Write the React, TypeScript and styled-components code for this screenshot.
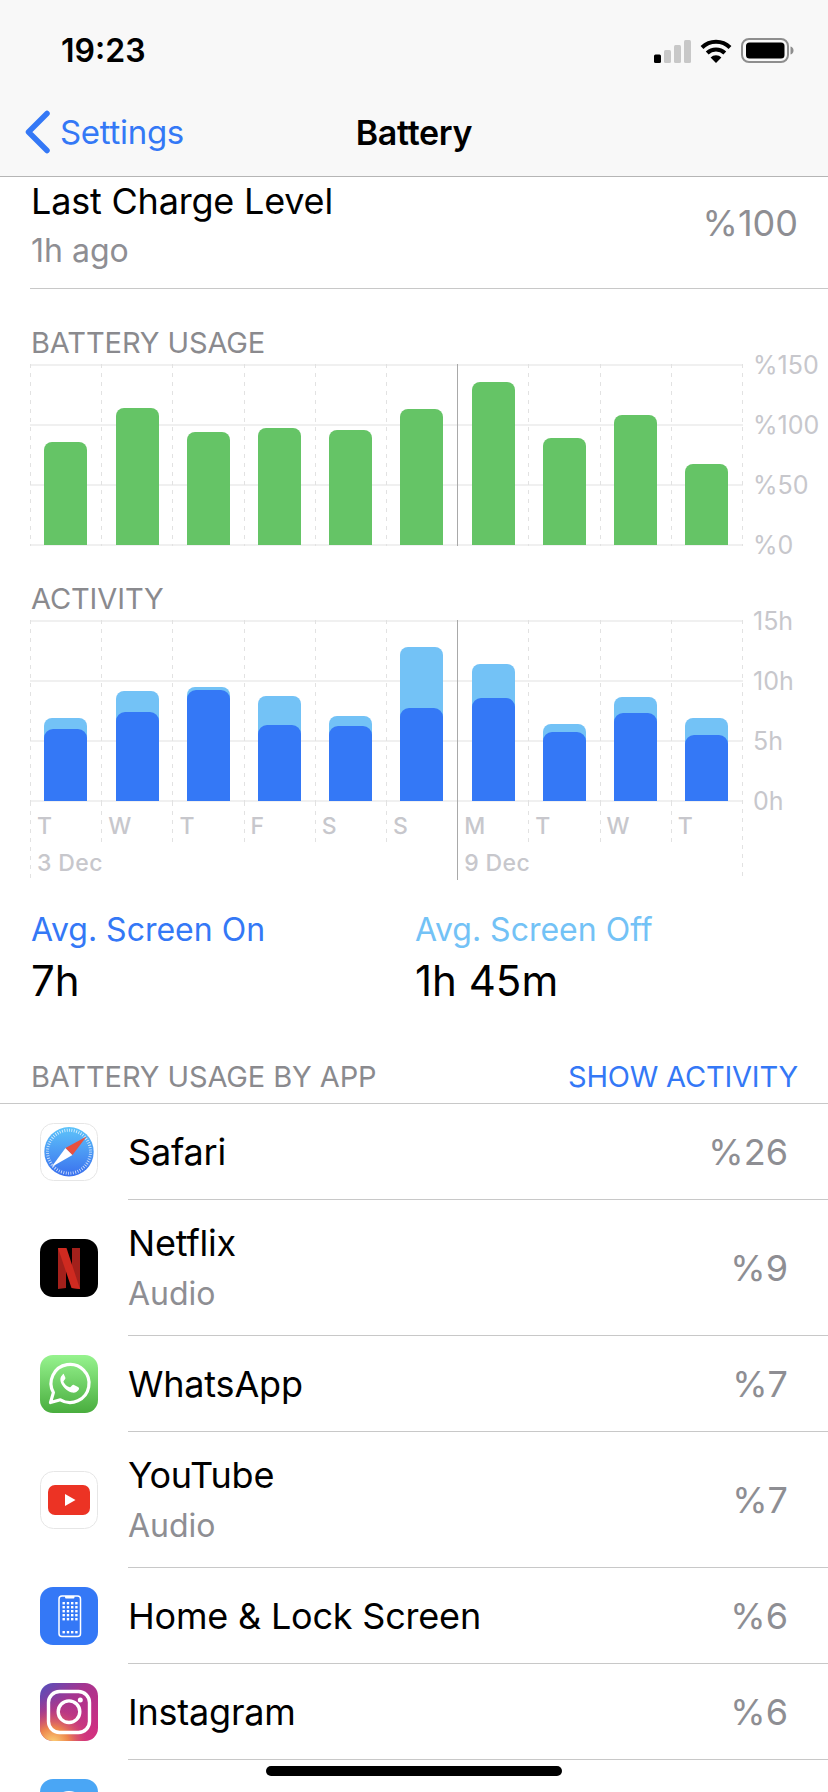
import styled, { createGlobalStyle } from "styled-components";

const GlobalStyle = createGlobalStyle`
	html, body {
		margin: 0;
		padding: 0;
		background: #fff;
	}
	body {
		font-family: Inter, "Liberation Sans", sans-serif;
		color: #000;
		-webkit-font-smoothing: antialiased;
	}
`

const Screen = styled.div`
	position: relative;
	width: 828px;
	height: 1792px;
	overflow: hidden;
	background: #fff;
`

const Header = styled.header`
	height: 176px;
	background: #f8f8f8;
	border-bottom: 1px solid #b5b5b5;
`

const StatusBar = styled.div`
	height: 100px;
	padding: 0 34px 0 61px;
	display: flex;
	align-items: center;
	justify-content: space-between;
`

const Time = styled.div`
	font-size: 32px;
	font-weight: 600;
`

const StatusIcons = styled.div`
	display: flex;
	align-items: flex-end;
	gap: 9px;
`

const NavBar = styled.nav`
	height: 64px;
	display: grid;
	grid-template-columns: 1fr auto 1fr;
	align-items: center;
`

const BackLink = styled.div`
	display: flex;
	align-items: center;
	gap: 9px;
	padding-left: 24px;
	font-size: 33px;
	color: #3478f6;
	letter-spacing: -0.3px;
`

const NavTitle = styled.div`
	font-size: 34px;
	font-weight: 600;
	letter-spacing: -0.3px;
`

const LastCharge = styled.section`
	margin: 0 0 1px 30px;
	height: 112px;
	padding: 4px 30px 0 1px;
	box-sizing: border-box;
	display: flex;
	justify-content: space-between;
	border-bottom: 1px solid #c8c8c8;
`

const RowTitle = styled.div`
	font-size: 36px;
	line-height: 40px;
	letter-spacing: -0.2px;
`

const RowSub = styled.div<{ $gap: number }>`
	margin-top: ${(p) => p.$gap}px;
	font-size: 32px;
	line-height: 36px;
	color: #8e8e93;
`

const RowValue = styled.div<{ $top?: number }>`
	margin-top: ${(p) => p.$top ?? 0}px;
	font-size: 36px;
	line-height: 40px;
	color: #8e8e93;
`

const ChartSection = styled.section`
	padding: 38px 0 0 31px;
`

const SectionLabel = styled.div`
	font-size: 29px;
	line-height: 30px;
	color: #8a8a8e;
	letter-spacing: -0.1px;
`

const ChartRow = styled.div`
	margin: 6px 0 0 -1px;
	display: flex;
`

const ChartBody = styled.div`
	position: relative;
	width: 713px;

	&::after {
		content: "";
		position: absolute;
		top: 0;
		bottom: 0;
		right: 0;
		width: 1px;
		background: repeating-linear-gradient(to bottom, #e2e2e2 0 4px, transparent 4px 9px);
	}
`

const Plot = styled.div`
	position: relative;
	height: 182px;
	display: grid;
	grid-template-columns: repeat(10, 71.2px);
`

const GridLine = styled.div<{ $top: number }>`
	position: absolute;
	left: 0;
	right: 0;
	top: ${(p) => p.$top}px;
	height: 2px;
	background: #f0f0f0;
`

const dashes = "repeating-linear-gradient(to bottom, #e2e2e2 0 4px, transparent 4px 9px)"
const solid = "linear-gradient(#a9a9a9, #a9a9a9)"

const Column = styled.div<{ $solid?: boolean }>`
	position: relative;
	display: flex;
	align-items: flex-end;
	padding: 0 0 1px 14.4px;
	background: ${(p) => (p.$solid ? solid : dashes)} left top / 1px 100% no-repeat;
`

const GreenBar = styled.div<{ $h: number }>`
	width: 43px;
	height: ${(p) => p.$h}px;
	background: #65c466;
	border-radius: 8px 8px 0 0;
`

const OffBar = styled.div<{ $h: number }>`
	width: 43px;
	height: ${(p) => p.$h}px;
	display: flex;
	align-items: flex-end;
	background: #73c2f6;
	border-radius: 8px 8px 0 0;
`

const OnBar = styled.div<{ $h: number }>`
	width: 100%;
	height: ${(p) => p.$h}px;
	background: #3478f6;
	border-radius: 9px 9px 0 0;
`

const DayRow = styled.div`
	height: 45px;
	display: grid;
	grid-template-columns: repeat(10, 71.2px);
`

const DayCell = styled.div<{ $solid?: boolean }>`
	padding: 10px 0 0 7px;
	font-size: 23px;
	line-height: 28px;
	font-weight: 500;
	color: #c7c7cc;
	background: ${(p) => (p.$solid ? solid : dashes)} left top / 1px 100% no-repeat;
`

const DateRow = styled.div`
	height: 33px;
	display: grid;
	grid-template-columns: 427.2px 284.8px;
`

const DateCell = styled(DayCell)`
	padding: 2px 0 0 7px;
	letter-spacing: 0.4px;
`

const YAxis = styled.div`
	margin: -12px 0 -12px 10px;
	height: 206px;
	display: flex;
	flex-direction: column;
	justify-content: space-between;
`

const YLabel = styled.div`
	font-size: 25px;
	line-height: 26px;
	color: #c7c7cc;
`

const Stats = styled.section`
	margin-top: 30px;
	padding-left: 31px;
	display: grid;
	grid-template-columns: 384px 1fr;
`

const StatLabel = styled.div<{ $color: string }>`
	font-size: 32px;
	line-height: 40px;
	color: ${(p) => p.$color};
`

const StatValue = styled.div`
	margin-top: 7px;
	font-size: 42px;
	line-height: 48px;
`

const AppsHeader = styled.div`
	margin-top: 57px;
	padding: 0 30px 11px 31px;
	display: flex;
	justify-content: space-between;
	font-size: 29px;
	line-height: 30px;
	color: #8a8a8e;
	letter-spacing: -0.1px;
	border-bottom: 1px solid #c8c8c8;
`

const ShowActivity = styled.div`
	color: #3478f6;
	letter-spacing: -0.2px;
`

const AppRow = styled.div`
	display: flex;
	padding-left: 40px;
`

const AppIcon = styled.div`
	flex: none;
	align-self: center;
	margin-right: 30px;
	width: 58px;
	height: 58px;

	svg {
		display: block;
	}
`

const AppBody = styled.div<{ $tall?: boolean }>`
	flex: 1;
	height: ${(p) => (p.$tall ? 135 : 95)}px;
	padding-right: 40px;
	display: flex;
	align-items: center;
	justify-content: space-between;
	border-bottom: 1px solid #c8c8c8;
`

const HomeIndicator = styled.div`
	position: absolute;
	left: 266px;
	top: 1766px;
	width: 296px;
	height: 10px;
	border-radius: 5px;
	background: #000;
`

const SignalBars = () => (
	<svg width="37" height="23" viewBox="0 0 37 23">
		<rect x="0" y="14.5" width="7" height="8.5" rx="1.5" fill="#000" />
		<rect x="10" y="10" width="7" height="13" rx="1.5" fill="#c8c8c8" />
		<rect x="20" y="5" width="7" height="18" rx="1.5" fill="#c8c8c8" />
		<rect x="30" y="0" width="7" height="23" rx="1.5" fill="#c8c8c8" />
	</svg>
)

const WifiIcon = () => (
	<svg width="32" height="24" viewBox="0 0 32 24">
		<path d="M2 8.5A20 20 0 0 1 30 8.5" fill="none" stroke="#000" strokeWidth="4" />
		<path d="M7.2 14A12.5 12.5 0 0 1 24.8 14" fill="none" stroke="#000" strokeWidth="4" />
		<path d="M16 24L10.6 18.4A7.6 7.6 0 0 1 21.4 18.4Z" fill="#000" />
	</svg>
)

const BatteryIcon = () => (
	<svg width="53" height="25" viewBox="0 0 53 25">
		<rect x="1" y="1" width="46" height="23" rx="7" fill="none" stroke="#8e8e8e" strokeWidth="2" />
		<rect x="5" y="4.5" width="38.5" height="16" rx="3.5" fill="#000" />
		<path d="M49.5 8.5C51.5 9 52.5 10.5 52.5 12.5C52.5 14.5 51.5 16 49.5 16.5Z" fill="#8e8e8e" />
	</svg>
)

const Chevron = () => (
	<svg width="27" height="44" viewBox="0 0 27 44">
		<path d="M23 3.5L4.5 22L23 40.5" fill="none" stroke="#3478f6" strokeWidth="5.5" strokeLinecap="round" strokeLinejoin="round" />
	</svg>
)

const SafariIcon = () => (
	<svg width="58" height="58" viewBox="0 0 58 58">
		<defs>
			<linearGradient id="safariBlue" x1="0" y1="0" x2="0" y2="1">
				<stop offset="0" stopColor="#5ec4fa" />
				<stop offset="1" stopColor="#3a70ee" />
			</linearGradient>
		</defs>
		<rect x="0.5" y="0.5" width="57" height="57" rx="13" fill="#fff" stroke="#e6e6e6" />
		<circle cx="29" cy="28.7" r="24.7" fill="url(#safariBlue)" />
		<circle cx="29" cy="28.7" r="21.5" fill="none" stroke="#fff" strokeOpacity="0.8" strokeWidth="3" strokeDasharray="0.8 1.6" />
		<path d="M11.5 44L25.5 25L32.5 32Z" fill="#fff" />
		<path d="M46.5 13.5L25.5 25L32.5 32Z" fill="#e9503f" />
	</svg>
)

const NetflixIcon = () => (
	<svg width="58" height="58" viewBox="0 0 58 58">
		<rect width="58" height="58" rx="13" fill="#000" />
		<path d="M18 9H26V49L18 50Z" fill="#a3201b" />
		<path d="M32 9H40V50L32 49Z" fill="#a3201b" />
		<path d="M18 9H26.5L40 50L31.5 49Z" fill="#cf2a20" />
	</svg>
)

const WhatsAppIcon = () => (
	<svg width="58" height="58" viewBox="0 0 58 58">
		<defs>
			<linearGradient id="whatsGreen" x1="0" y1="0" x2="0" y2="1">
				<stop offset="0" stopColor="#96f38e" />
				<stop offset="1" stopColor="#49ad3e" />
			</linearGradient>
		</defs>
		<rect width="58" height="58" rx="13" fill="url(#whatsGreen)" />
		<path d="M10.5 47.5L13.4 37.6A19 19 0 1 1 20.4 44.8Z" fill="none" stroke="#fff" strokeWidth="3.2" strokeLinejoin="round" />
		<path d="M22 20.5C21 21.5 20 23 20.5 26C21.5 31 27 36.5 32 37.5C35 38 37 37 38.5 35C39.5 33.5 39 32.5 38 32L34 30C33 29.5 32.5 30 32 30.5L30.5 32C29.5 32.5 28.5 32 27 31C25.5 30 24.5 28.5 23.8 27.5C23.2 26.5 23.5 26 24 25.5L25 24.2C25.5 23.5 25.5 23 25.2 22.3L23.7 19C23.3 18.2 22.5 20 22 20.5Z" fill="#fff" />
	</svg>
)

const YouTubeIcon = () => (
	<svg width="58" height="58" viewBox="0 0 58 58">
		<rect x="0.5" y="0.5" width="57" height="57" rx="13" fill="#fff" stroke="#e6e6e6" />
		<rect x="8" y="14" width="42" height="30" rx="7" fill="#ec3324" />
		<path d="M25 23L35.5 29L25 35Z" fill="#fff" />
	</svg>
)

const HomeScreenIcon = () => (
	<svg width="58" height="58" viewBox="0 0 58 58">
		<rect width="58" height="58" rx="13" fill="#3478f6" />
		<rect x="19" y="9" width="21.5" height="40.5" rx="3" fill="none" stroke="#fff" strokeWidth="1.5" />
		<path d="M25 9H34.5V10C34.5 11 34 11.5 33 11.5H26.5C25.5 11.5 25 11 25 10Z" fill="#fff" />
		{[15, 19, 23, 27, 31].map((y) =>
			[22.5, 26.8, 31, 35.2].map((x) => (
				<rect key={`${x}-${y}`} x={x} y={y} width="2.4" height="2.4" fill="#fff" />
			))
		)}
		{[22.5, 26.8, 31, 35.2].map((x) => (
			<rect key={x} x={x} y="44" width="2.4" height="2.4" fill="#fff" />
		))}
	</svg>
)

const InstagramIcon = () => (
	<svg width="58" height="58" viewBox="0 0 58 58">
		<defs>
			<linearGradient id="igBase" x1="0.9" y1="0.9" x2="0.1" y2="0">
				<stop offset="0" stopColor="#d02f82" />
				<stop offset="0.6" stopColor="#a6348f" />
				<stop offset="1" stopColor="#5b4db8" />
			</linearGradient>
			<radialGradient id="igGlow" cx="0.22" cy="1.05" r="0.8">
				<stop offset="0" stopColor="#fdd97a" />
				<stop offset="0.35" stopColor="#f08a4a" stopOpacity="0.95" />
				<stop offset="0.75" stopColor="#d9436e" stopOpacity="0.25" />
				<stop offset="1" stopColor="#d9436e" stopOpacity="0" />
			</radialGradient>
		</defs>
		<rect width="58" height="58" rx="13" fill="url(#igBase)" />
		<rect width="58" height="58" rx="13" fill="url(#igGlow)" />
		<rect x="8.5" y="8.5" width="41" height="41" rx="11" fill="none" stroke="#fff" strokeWidth="3.4" />
		<circle cx="29" cy="28.7" r="10.8" fill="none" stroke="#fff" strokeWidth="3.4" />
		<circle cx="40.3" cy="17" r="2.5" fill="#fff" />
	</svg>
)

const NextAppIcon = () => (
	<svg width="58" height="58" viewBox="0 0 58 58">
		<rect width="58" height="58" rx="13" fill="#4aa6f5" />
		<ellipse cx="29" cy="29" rx="17" ry="17" fill="#fff" />
	</svg>
)

const usage = [103, 137, 113, 117, 115, 136, 163, 107, 130, 81]
const activity = [
	[83, 72], [110, 89], [114, 111], [105, 76], [85, 75],
	[154, 93], [137, 103], [77, 69], [104, 88], [83, 66],
]
const days = ["T", "W", "T", "F", "S", "S", "M", "T", "W", "T"]
const divider = 6

const apps = [
	{ name: "Safari", value: "%26", icon: <SafariIcon /> },
	{ name: "Netflix", sub: "Audio", value: "%9", icon: <NetflixIcon /> },
	{ name: "WhatsApp", value: "%7", icon: <WhatsAppIcon /> },
	{ name: "YouTube", sub: "Audio", value: "%7", icon: <YouTubeIcon /> },
	{ name: "Home & Lock Screen", value: "%6", icon: <HomeScreenIcon /> },
	{ name: "Instagram", value: "%6", icon: <InstagramIcon /> },
]

const Lines = () => (
	<>
		{[0, 60, 120, 180].map((top) => (
			<GridLine key={top} $top={top} />
		))}
	</>
)

const App = () => {
	return (
		<Screen>
			<GlobalStyle />
			<Header>
				<StatusBar>
					<Time>19:23</Time>
					<StatusIcons>
						<SignalBars />
						<WifiIcon />
						<BatteryIcon />
					</StatusIcons>
				</StatusBar>
				<NavBar>
					<BackLink>
						<Chevron />
						Settings
					</BackLink>
					<NavTitle>Battery</NavTitle>
				</NavBar>
			</Header>

			<LastCharge>
				<div>
					<RowTitle>Last Charge Level</RowTitle>
					<RowSub $gap={12}>1h ago</RowSub>
				</div>
				<RowValue $top={22}>%100</RowValue>
			</LastCharge>

			<ChartSection>
				<SectionLabel>BATTERY USAGE</SectionLabel>
				<ChartRow>
					<ChartBody>
						<Plot>
							<Lines />
							{usage.map((h, i) => (
								<Column key={i} $solid={i === divider}>
									<GreenBar $h={h} />
								</Column>
							))}
						</Plot>
					</ChartBody>
					<YAxis>
						{["%150", "%100", "%50", "%0"].map((t) => (
							<YLabel key={t}>{t}</YLabel>
						))}
					</YAxis>
				</ChartRow>
			</ChartSection>

			<ChartSection>
				<SectionLabel>ACTIVITY</SectionLabel>
				<ChartRow>
					<ChartBody>
						<Plot>
							<Lines />
							{activity.map(([off, on], i) => (
								<Column key={i} $solid={i === divider}>
									<OffBar $h={off}>
										<OnBar $h={on} />
									</OffBar>
								</Column>
							))}
						</Plot>
						<DayRow>
							{days.map((d, i) => (
								<DayCell key={i} $solid={i === divider}>{d}</DayCell>
							))}
						</DayRow>
						<DateRow>
							<DateCell>3 Dec</DateCell>
							<DateCell $solid>9 Dec</DateCell>
						</DateRow>
					</ChartBody>
					<YAxis>
						{["15h", "10h", "5h", "0h"].map((t) => (
							<YLabel key={t}>{t}</YLabel>
						))}
					</YAxis>
				</ChartRow>
			</ChartSection>

			<Stats>
				<div>
					<StatLabel $color="#3478f6">Avg. Screen On</StatLabel>
					<StatValue>7h</StatValue>
				</div>
				<div>
					<StatLabel $color="#73c2f6">Avg. Screen Off</StatLabel>
					<StatValue>1h 45m</StatValue>
				</div>
			</Stats>

			<AppsHeader>
				<div>BATTERY USAGE BY APP</div>
				<ShowActivity>SHOW ACTIVITY</ShowActivity>
			</AppsHeader>

			{apps.map((app) => (
				<AppRow key={app.name}>
					<AppIcon>{app.icon}</AppIcon>
					<AppBody $tall={!!app.sub}>
						<div>
							<RowTitle>{app.name}</RowTitle>
							{app.sub && <RowSub $gap={13}>{app.sub}</RowSub>}
						</div>
						<RowValue>{app.value}</RowValue>
					</AppBody>
				</AppRow>
			))}
			<AppRow>
				<AppIcon><NextAppIcon /></AppIcon>
				<AppBody />
			</AppRow>

			<HomeIndicator />
		</Screen>
	)
}

export default App;
